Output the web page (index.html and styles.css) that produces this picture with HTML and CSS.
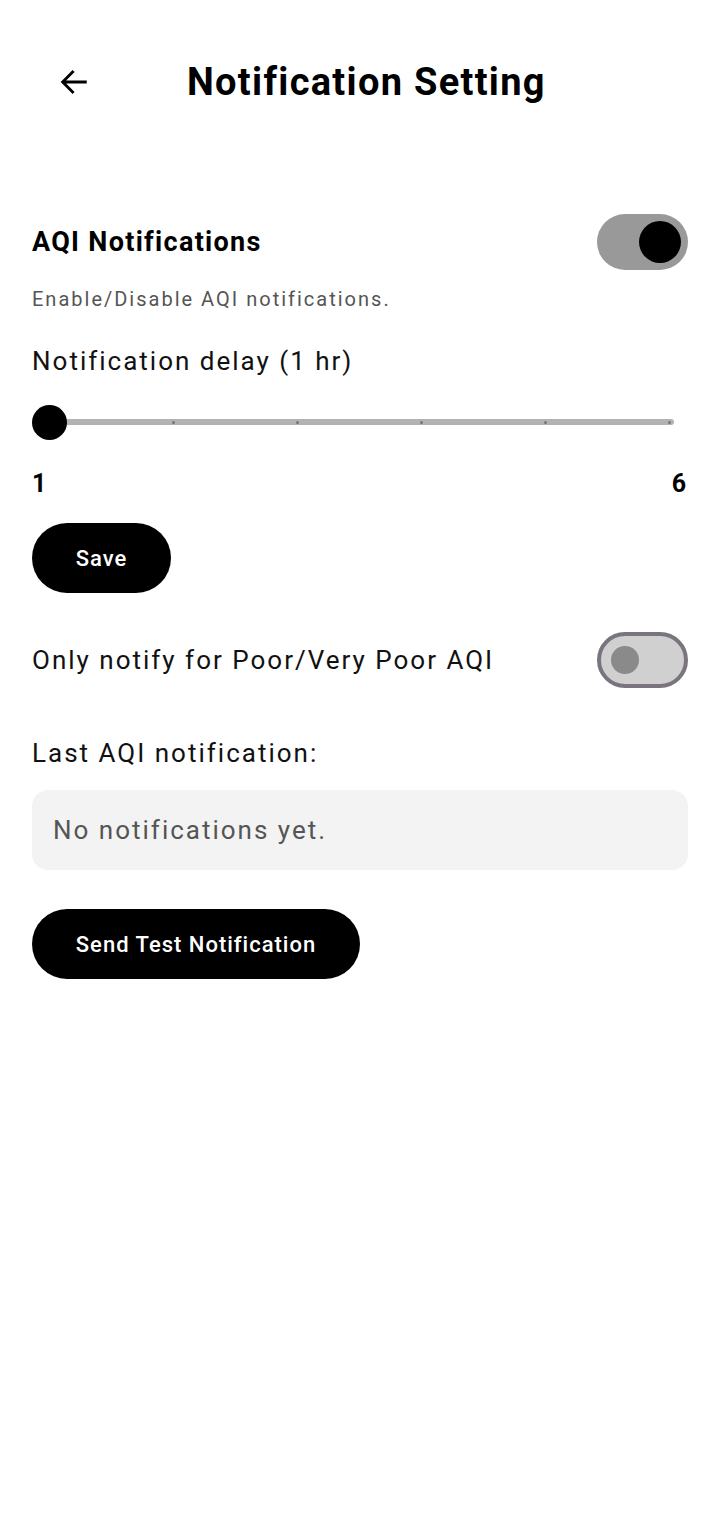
FILE: index.html
```html
<!DOCTYPE html>
<html>
<head>
<meta charset="utf-8">
<link rel="stylesheet" href="styles.css">
</head>
<body>
<div class="page">
  <header class="topbar">
    <button class="back" aria-label="Back">
      <svg width="34" height="34" viewBox="0 0 24 24"><path d="M20 12H4.5M11 5l-7 7 7 7" fill="none" stroke="#000" stroke-width="2" stroke-linecap="square"/></svg>
    </button>
    <h1 class="title">Notification Setting</h1>
  </header>

  <section class="content">
    <div class="row row-main">
      <div class="label-bold">AQI Notifications</div>
      <div class="switch on"><span class="knob"></span></div>
    </div>
    <div class="hint">Enable/Disable AQI notifications.</div>

    <div class="label delay">Notification delay (1 hr)</div>
    <div class="slider">
      <div class="track">
        <span class="tick"></span><span class="tick"></span><span class="tick"></span><span class="tick"></span><span class="tick"></span>
      </div>
      <span class="thumb"></span>
    </div>
    <div class="range-labels"><span>1</span><span>6</span></div>

    <button class="btn save">Save</button>

    <div class="row row-poor">
      <div class="label">Only notify for Poor/Very Poor AQI</div>
      <div class="switch off"><span class="knob"></span></div>
    </div>

    <div class="label last">Last AQI notification:</div>
    <div class="box">No notifications yet.</div>

    <button class="btn test">Send Test Notification</button>
  </section>
</div>
</body>
</html>
```

FILE: styles.css
```css
* { box-sizing: border-box; }
html, body { margin: 0; padding: 0; background: #fff; }
body { font-family: Roboto, "Noto Sans", sans-serif; color: #111; }
.page { width: 720px; min-height: 1517px; }

.topbar { display: flex; align-items: center; height: 164px; padding: 0 0 0 57px; }
.back { width: 34px; height: 34px; padding: 0; border: 0; background: none; display: flex; align-items: center; justify-content: center; }
.title { margin: 0 0 0 96px; font-size: 38px; line-height: 44px; font-weight: 700; letter-spacing: 1.3px; color: #000; }

.content { padding: 50px 32px 0 32px; display: flex; flex-direction: column; }

.row { display: flex; align-items: center; justify-content: space-between; }
.label-bold { font-size: 27px; line-height: 32px; font-weight: 700; letter-spacing: 1.3px; color: #000; }
.label { font-size: 26px; line-height: 30px; color: #111; letter-spacing: 2px; }
.hint { font-size: 20px; line-height: 24px; color: #555; margin-top: 17px; letter-spacing: 2px; }

.switch { width: 91px; height: 56px; border-radius: 28px; position: relative; flex: none; }
.switch.on { background: #999; }
.switch.on .knob { position: absolute; right: 7px; top: 7px; width: 42px; height: 42px; border-radius: 50%; background: #000; }
.switch.off { background: #d0d0d0; border: 4px solid #79747e; }
.switch.off .knob { position: absolute; left: 10px; top: 10px; width: 28px; height: 28px; border-radius: 50%; background: #8a8a8a; }

.delay { margin-top: 35px; }
.slider { position: relative; height: 40px; margin-top: 26px; }
.track { position: absolute; left: 16px; right: 14px; top: 17px; height: 6px; border-radius: 3px; background: #b2b2b2; }
.tick { position: absolute; top: 2px; width: 3px; height: 3px; border-radius: 50%; background: #777; }
.tick:nth-child(1) { left: 124px; }
.tick:nth-child(2) { left: 248px; }
.tick:nth-child(3) { left: 372px; }
.tick:nth-child(4) { left: 496px; }
.tick:nth-child(5) { left: 620px; }
.thumb { position: absolute; left: 0; top: 3px; width: 35px; height: 35px; border-radius: 50%; background: #000; }

.range-labels { display: flex; justify-content: space-between; font-size: 25px; line-height: 30px; font-weight: 700; color: #000; margin-top: 27px; padding-right: 2px; }

.btn { border: 0; background: #000; color: #fff; font-family: inherit; font-size: 22px; font-weight: 500; letter-spacing: 1px; height: 70px; border-radius: 35px; align-self: flex-start; padding: 0; }
.save { width: 139px; margin-top: 24px; }

.row-poor { margin-top: 39px; }
.last { margin-top: 50px; }
.box { margin-top: 22px; height: 80px; border-radius: 16px; background: #f3f3f3; color: #555; font-size: 26px; letter-spacing: 2px; display: flex; align-items: center; padding-left: 21px; }
.test { width: 328px; margin-top: 39px; }
```
